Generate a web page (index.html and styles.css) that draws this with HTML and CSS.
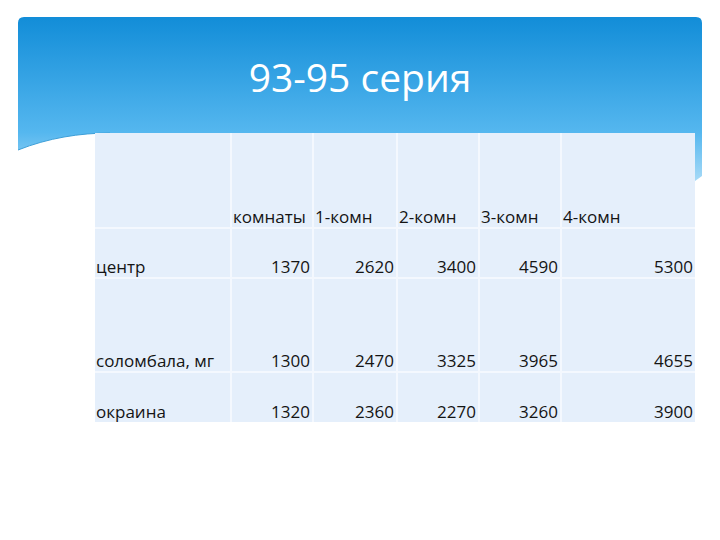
FILE: index.html
```html
<!DOCTYPE html>
<html lang="ru">
<head>
<meta charset="utf-8">
<title>93-95 серия</title>
<link rel="stylesheet" href="styles.css">
</head>
<body>
<div class="slide">
  <svg class="bg" width="720" height="540" viewBox="0 0 720 540" aria-hidden="true">
    <defs>
      <linearGradient id="blue" x1="0" y1="17" x2="0" y2="182" gradientUnits="userSpaceOnUse">
        <stop offset="0" stop-color="#128dd8"/>
        <stop offset="0.70" stop-color="#55b7ef"/>
        <stop offset="1" stop-color="#a9dbf7"/>
      </linearGradient>
    </defs>
    <path d="M18,150 V23 Q18,17 24,17 H696 Q702,17 702,23 V176 L695,181 V133 H110 C80,133 48,138 18,150 Z" fill="url(#blue)"/>
    <path d="M18,150 C48,138 80,133 110,133" fill="none" stroke="#3d9fd8" stroke-width="1"/>
  </svg>
  <h1 class="title">93-95 серия</h1>
  <table class="grid">
    <colgroup>
      <col class="c1"><col class="c2"><col class="c3"><col class="c4"><col class="c5"><col class="c6">
    </colgroup>
    <tr class="r-head">
      <td></td><td>комнаты</td><td>1-комн</td><td>2-комн</td><td>3-комн</td><td>4-комн</td>
    </tr>
    <tr class="r-short">
      <td>центр</td><td class="num">1370</td><td class="num">2620</td><td class="num">3400</td><td class="num">4590</td><td class="num">5300</td>
    </tr>
    <tr class="r-tall">
      <td>соломбала, мг</td><td class="num">1300</td><td class="num">2470</td><td class="num">3325</td><td class="num">3965</td><td class="num">4655</td>
    </tr>
    <tr class="r-short">
      <td>окраина</td><td class="num">1320</td><td class="num">2360</td><td class="num">2270</td><td class="num">3260</td><td class="num">3900</td>
    </tr>
  </table>
</div>
</body>
</html>
```
FILE: styles.css
```css
html, body {
  margin: 0;
  padding: 0;
  background: #ffffff;
}

.slide {
  position: relative;
  width: 720px;
  height: 540px;
  overflow: hidden;
  font-family: "Open Sans", "Noto Sans", sans-serif;
}

.bg {
  position: absolute;
  left: 0;
  top: 0;
}

.title {
  position: relative;
  margin: 0;
  padding-top: 54px;
  height: 46px;
  line-height: 46px;
  text-align: center;
  font-size: 39px;
  font-weight: 400;
  color: #ffffff;
}

.grid {
  position: relative;
  margin: 33px 0 0 95px;
  width: 600px;
  table-layout: fixed;
  border-collapse: collapse;
  background: #e5effb;
  font-size: 17px;
  color: #141414;
}

.c1 { width: 136px; }
.c2 { width: 82px; }
.c3 { width: 84px; }
.c4 { width: 82px; }
.c5 { width: 82px; }
.c6 { width: 134px; }

.grid td {
  border: 2px solid #f4f8fe;
  padding: 0 1px 0 1px;
  line-height: 20px;
  vertical-align: bottom;
  white-space: nowrap;
  text-align: left;
}

.grid tr:first-child td { border-top: none; }
.grid tr:last-child td { border-bottom: none; }
.grid td:first-child { border-left: none; }
.grid td:last-child { border-right: none; }

.grid td.num {
  text-align: right;
  padding-right: 2px;
}

.r-head { height: 95px; }
.r-short { height: 50px; }
.r-tall { height: 94px; }
```
